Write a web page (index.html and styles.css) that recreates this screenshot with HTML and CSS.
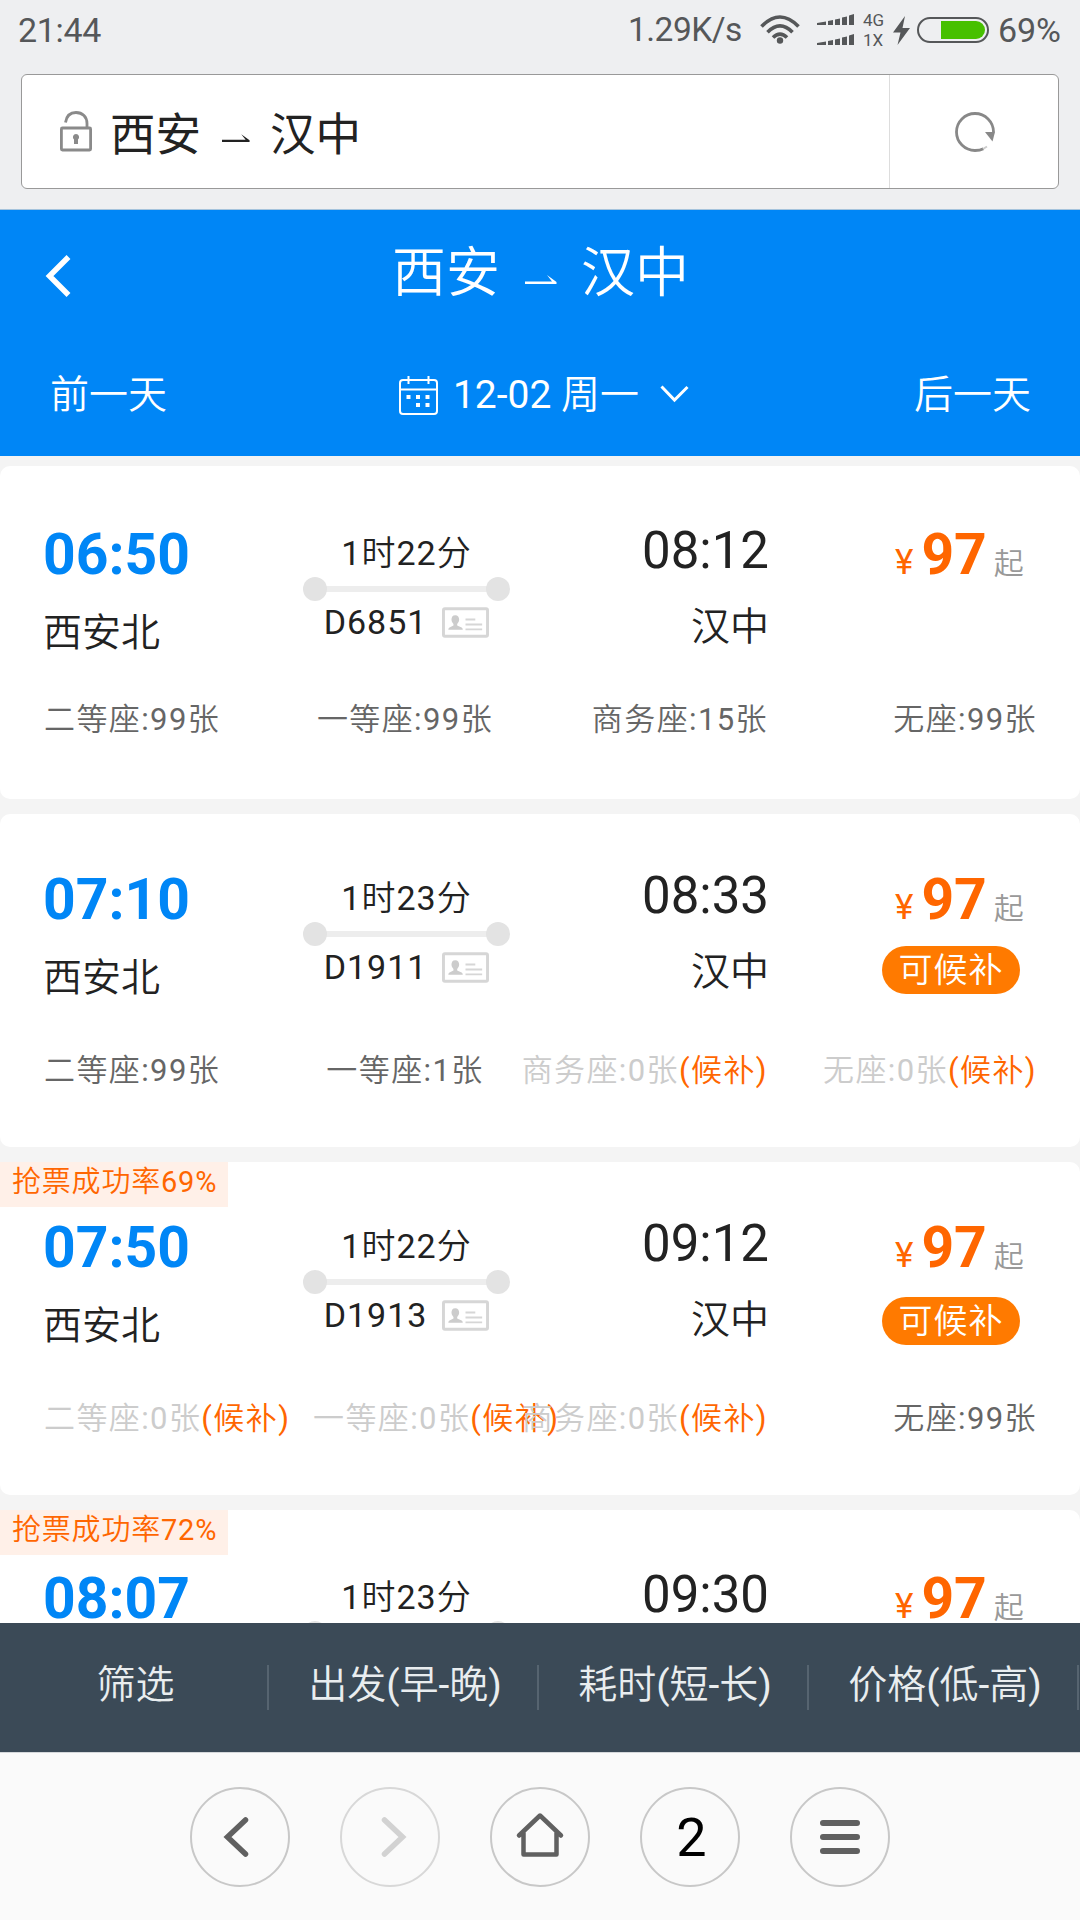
FILE: index.html
```html
<!DOCTYPE html>
<html lang="zh-CN">
<head>
<meta charset="UTF-8">
<meta name="viewport" content="width=device-width, initial-scale=1.0">
<title>西安 - 汉中</title>
<link rel="stylesheet" href="styles.css">
</head>
<body>

<!-- shared icons -->
<svg class="defs" width="0" height="0">
    <symbol id="half-arrow" viewBox="0 0 32 10">
        <path d="M0 6.4H27L22 0L31.5 7V9H0Z" fill="currentColor"/>
    </symbol>
    <symbol id="id-card" viewBox="0 0 48 31">
        <rect x="1.5" y="1.5" width="45" height="28" rx="1.5" fill="none" stroke="#d6d6d6" stroke-width="3"/>
        <path d="M13.5 8c2.8 0 4 2 4 4.500c0 2-1 3.500-2 4.500v1.500l4.500 2c1 .5 1.200 1.500 1.200 2.500H6.500c0-1 .2-2 1.200-2.500l4-2V17c-1-1-2-2.500-2-4.500C9.700 10 10.700 8 13.500 8Z" fill="#ccc"/>
        <path d="M24 12.500h10M24 17.500h17M24 22.500h17" stroke="#d6d6d6" stroke-width="2"/>
    </symbol>
</svg>

<div class="status-bar">
    <span class="clock">21:44</span>
    <span class="speed">1.29K/s</span>
    <svg class="wifi" width="40" height="30" viewBox="0 0 40 30">
        <g fill="none" stroke="#555759" stroke-width="3.600">
            <path d="M1.500 11.500Q20 -7.500 38.500 11.500"/>
            <path d="M7.500 17.300Q20 4.500 32.500 17.300"/>
            <path d="M13 22.500Q20 15.500 27 22.500"/>
        </g>
        <circle cx="20" cy="25.500" r="3.200" fill="#555759"/>
    </svg>
    <svg class="signal" width="38" height="33" viewBox="0 0 38 33" fill="#555759">
        <path d="M0 9L9 7.500V11H0ZM11 7L16 6V11H11ZM18 5.500L23 4.500V11H18ZM25 3.500L30 2.500V11H25ZM32 1.500L37 0V11H32Z"/>
        <path d="M0 29L9 27.500V31H0ZM11 27L16 26V31H11ZM18 25.500L23 24.500V31H18ZM25 23.500L30 22.500V31H25ZM32 21.500L37 20V31H32Z"/>
    </svg>
    <div class="net"><span>4G</span><span>1X</span></div>
    <svg class="bolt" width="17" height="29" viewBox="0 0 17 29">
        <path d="M12 0L0 16.500H7.500L4.500 29L17 12H9.500Z" fill="#555759"/>
    </svg>
    <div class="battery"><i></i></div>
    <span class="percent">69%</span>
</div>

<div class="address-row">
    <div class="address">
        <div class="url">
            <svg class="lock" width="32" height="41" viewBox="0 0 32 41">
                <g fill="none" stroke="#8a8a8a" stroke-width="2.800">
                    <rect x="1.400" y="17" width="29.200" height="22" rx="1"/>
                    <path d="M5.500 11.500C6.500 5 10.500 1.500 16 1.500C22.500 1.500 27 6 27 12.500V17"/>
                </g>
                <path d="M16 23a3.200 3.200 0 0 1 2 5.600V33h-4v-4.400A3.200 3.200 0 0 1 16 23Z" fill="#8a8a8a"/>
            </svg>
            <span>西安</span>
            <svg class="arrow" width="28" height="9"><use href="#half-arrow"/></svg>
            <span>汉中</span>
        </div>
        <div class="refresh">
            <svg width="42" height="42" viewBox="0 0 42 42">
                <path d="M39.500 21A18.500 18.500 0 1 0 21 39.500Q26 39.500 29.500 37.800" fill="none" stroke="#888" stroke-width="2.800"/>
                <path d="M29 38L33 35.500" stroke="#ccc" stroke-width="2"/>
                <path d="M31 21H41L38.500 30.500Z" fill="#888"/>
            </svg>
        </div>
    </div>
</div>

<div class="header">
    <div class="title-row">
        <svg class="back" width="26" height="42" viewBox="0 0 26 42"><path d="M23.500 2L4.500 21L23.500 40" fill="none" stroke="#fff" stroke-width="5.500"/></svg>
        <div class="title">
            <span>西安</span>
            <svg class="arrow" width="32" height="10"><use href="#half-arrow"/></svg>
            <span>汉中</span>
        </div>
    </div>
    <div class="date-row">
        <span class="prev">前一天</span>
        <div class="date">
            <svg width="39" height="39" viewBox="0 0 39 39">
                <g fill="none" stroke="#fff" stroke-width="2">
                    <rect x="1" y="4" width="37" height="34" rx="3"/>
                    <path d="M1 13.500H38M9.500 0V8M29.500 0V8"/>
                </g>
                <path d="M7.500 19h4v4h-4zM17 19h4v4h-4zM26.500 19h4v4h-4zM17 27h4v4h-4zM26.500 27h4v4h-4z" fill="#fff"/>
            </svg>
            <span>12-02 周一</span>
            <svg class="down" width="29" height="18" viewBox="0 0 29 18"><path d="M1.500 1.500L14.500 15L27.500 2" fill="none" stroke="#fff" stroke-width="3"/></svg>
        </div>
        <span class="next">后一天</span>
    </div>
</div>

<div class="list">
    <div class="card card-first">
        <div class="main">
            <div class="from"><b>06:50</b><p>西安北</p></div>
            <div class="trip">
                <p>1时22分</p>
                <div class="line"></div>
                <p class="no">D6851<svg width="48" height="31"><use href="#id-card"/></svg></p>
            </div>
            <div class="to"><b>08:12</b><p>汉中</p></div>
            <div class="fare">
                <div class="price"><i>¥</i><b>97</b><span>起</span></div>
            </div>
        </div>
        <div class="seats">
            <span>二等座:99张</span>
            <span>一等座:99张</span>
            <span>商务座:15张</span>
            <span>无座:99张</span>
        </div>
    </div>

    <div class="card">
        <div class="main">
            <div class="from"><b>07:10</b><p>西安北</p></div>
            <div class="trip">
                <p>1时23分</p>
                <div class="line"></div>
                <p class="no">D1911<svg width="48" height="31"><use href="#id-card"/></svg></p>
            </div>
            <div class="to"><b>08:33</b><p>汉中</p></div>
            <div class="fare">
                <div class="price"><i>¥</i><b>97</b><span>起</span></div>
                <div class="wait">可候补</div>
            </div>
        </div>
        <div class="seats">
            <span>二等座:99张</span>
            <span>一等座:1张</span>
            <span class="none">商务座:0张<em>(候补)</em></span>
            <span class="none">无座:0张<em>(候补)</em></span>
        </div>
    </div>

    <div class="card card-rate">
        <div class="rate">抢票成功率69%</div>
        <div class="main">
            <div class="from"><b>07:50</b><p>西安北</p></div>
            <div class="trip">
                <p>1时22分</p>
                <div class="line"></div>
                <p class="no">D1913<svg width="48" height="31"><use href="#id-card"/></svg></p>
            </div>
            <div class="to"><b>09:12</b><p>汉中</p></div>
            <div class="fare">
                <div class="price"><i>¥</i><b>97</b><span>起</span></div>
                <div class="wait">可候补</div>
            </div>
        </div>
        <div class="seats">
            <span class="none">二等座:0张<em>(候补)</em></span>
            <span class="none">一等座:0张<em>(候补)</em></span>
            <span class="none">商务座:0张<em>(候补)</em></span>
            <span>无座:99张</span>
        </div>
    </div>

    <div class="card card-last">
        <div class="rate">抢票成功率72%</div>
        <div class="main">
            <div class="from"><b>08:07</b></div>
            <div class="trip">
                <p>1时23分</p>
                <div class="line"></div>
            </div>
            <div class="to"><b>09:30</b></div>
            <div class="fare">
                <div class="price"><i>¥</i><b>97</b><span>起</span></div>
            </div>
        </div>
    </div>
</div>

<div class="filters">
    <div>筛选</div>
    <div>出发(早-晚)</div>
    <div>耗时(短-长)</div>
    <div>价格(低-高)</div>
</div>

<div class="toolbar">
    <div class="btn">
        <svg width="100" height="100" viewBox="0 0 100 100"><path d="M55.500 33L37.500 50L55.500 67" fill="none" stroke="#606060" stroke-width="5.500" stroke-linecap="round"/></svg>
    </div>
    <div class="btn off">
        <svg width="100" height="100" viewBox="0 0 100 100"><path d="M44.500 33L62.500 50L44.500 67" fill="none" stroke="#d2d2d2" stroke-width="5.500" stroke-linecap="round"/></svg>
    </div>
    <div class="btn">
        <svg width="100" height="100" viewBox="0 0 100 100"><path d="M29 48.500L50 28.500L71 48.500M33.500 46V67.500H66.500V46" fill="none" stroke="#606060" stroke-width="4.500" stroke-linecap="round" stroke-linejoin="round"/></svg>
    </div>
    <div class="btn count">2</div>
    <div class="btn">
        <svg width="100" height="100" viewBox="0 0 100 100"><path d="M33 36H67M33 50H67M33 64H67" stroke="#606060" stroke-width="6" stroke-linecap="round"/></svg>
    </div>
</div>

</body>
</html>
```

FILE: styles.css
```css
* {
    box-sizing: border-box;
}

body {
    display: flex;
    flex-direction: column;
    width: 1080px;
    height: 1920px;
    margin: 0;
    overflow: hidden;
    background-color: #f4f4f4;
    color: #222;
    font-family: Roboto, "Noto Sans CJK SC DemiLight", "Noto Sans CJK SC", sans-serif;
}

p {
    margin: 0;
}

i, em {
    font-style: normal;
}

svg {
    display: block;
    flex: none;
}

.defs {
    position: absolute;
}

/* status bar */
.status-bar {
    display: flex;
    align-items: center;
    height: 60px;
    padding: 0 19px 0 18px;
    background-color: #eeeff1;
    color: #555759;
    font-size: 34px;
    line-height: 60px;
}

.clock {
    letter-spacing: -0.3px;
}

.speed {
    margin-left: auto;
    font-size: 33.5px;
    letter-spacing: -0.5px;
}

.wifi {
    margin-left: 18px;
}

.signal {
    margin-left: 17px;
}

.net {
    display: flex;
    flex-direction: column;
    width: 23px;
    margin-left: 8px;
    font-size: 17px;
    line-height: 20px;
}

.bolt {
    margin-left: 7px;
}

.battery {
    display: flex;
    justify-content: flex-end;
    width: 72px;
    height: 26px;
    margin: 0 9px 0 7px;
    padding: 2px;
    border: 2px solid #555759;
    border-radius: 13px;
}

.battery i {
    width: 44px;
    background-color: #47c000;
    border-radius: 0 9px 9px 0;
}

/* address bar */
.address-row {
    height: 150px;
    padding: 14px 21px 0;
    background-color: #eeeff1;
    border-bottom: 1px solid #a5c3dc;
}

.address {
    display: flex;
    height: 115px;
    background-color: #fff;
    border: 1px solid #999;
    border-radius: 6px;
}

.url {
    display: flex;
    align-items: center;
    flex: 1;
    padding-left: 38px;
    font-family: "Noto Sans CJK SC", sans-serif;
    font-size: 45.5px;
    line-height: 58px;
}

.url span {
    margin-top: -2px;
}

.lock {
    margin-right: 18px;
}

.url .arrow {
    margin: 14px 20px 0 21px;
}

.refresh {
    display: flex;
    align-items: center;
    justify-content: center;
    width: 169px;
    padding-left: 2px;
    border-left: 1px solid #ddd;
}

/* page header */
.header {
    height: 246px;
    background-color: #0086f6;
    color: #fff;
}

.title-row {
    display: flex;
    align-items: center;
    height: 126px;
    padding: 6px 44px 0 45px;
}

.title {
    display: flex;
    align-items: center;
    justify-content: center;
    flex: 1;
    margin-right: 26px;
    font-size: 54px;
    line-height: 60px;
}

.title span {
    margin-top: -4px;
}

.title .arrow {
    margin: 7px 24px 0 25px;
}

.date-row {
    display: flex;
    align-items: center;
    justify-content: space-between;
    height: 118px;
    padding: 0 49px 0 50px;
    font-size: 39px;
    line-height: 48px;
}

.date {
    display: flex;
    align-items: center;
    margin-left: 7px;
}

.date span {
    margin: -1px 21px 0 15px;
}

.date .down {
    margin-top: -3px;
}

/* train list */
.list {
    display: flex;
    flex-direction: column;
    gap: 15px;
    height: 1167px;
    padding-top: 10px;
    overflow: hidden;
}

.card {
    position: relative;
    flex: none;
    height: 333px;
    padding: 55px 43px 0 44px;
    background-color: #fff;
    border-radius: 10px;
}

.card-first,
.card-last {
    padding-top: 58px;
}

.main {
    display: grid;
    grid-template-columns: 269px 184px 271px 269px;
    height: 184px;
}

.card-first .main {
    height: 178px;
}

.from b {
    display: block;
    margin: 1px 0 0 -1px;
    color: #0086f6;
    font-size: 57px;
    line-height: 60px;
}

.from p,
.to p {
    font-size: 39px;
    line-height: 48px;
}

.from p {
    margin: 24px 0 0 -1px;
}

.trip {
    width: 207px;
    margin-left: -10px;
    padding-top: 11px;
    font-size: 34px;
    line-height: 36px;
    letter-spacing: 1px;
    text-align: center;
}

.line {
    display: flex;
    align-items: center;
    justify-content: space-between;
    height: 24px;
    margin: 6px 0 3px;
    background: linear-gradient(#ededed, #ededed) center / 180px 6px no-repeat;
}

.line::before,
.line::after {
    content: "";
    width: 24px;
    height: 24px;
    background-color: #e3e3e3;
    border-radius: 50%;
}

.no {
    display: flex;
    align-items: center;
    justify-content: center;
}

.no svg {
    width: 47px;
    margin-left: 15px;
}

.to {
    margin-right: -1px;
    text-align: right;
}

.to b {
    display: block;
    font-size: 51px;
    font-weight: normal;
    line-height: 54px;
}

.to p {
    margin-top: 25px;
}

.price {
    display: flex;
    align-items: baseline;
    height: 60px;
    padding: 1px 0 0 127px;
    color: #ff6600;
    line-height: 60px;
}

.price i {
    font-size: 35px;
}

.price b {
    margin: 0 7px 0 8px;
    font-size: 57px;
}

.price span {
    color: #999;
    font-size: 30px;
}

.wait {
    width: 138px;
    height: 48px;
    margin: 17px 0 0 114px;
    background-color: #ff7a00;
    border-radius: 24px;
    color: #fff;
    font-size: 34px;
    line-height: 48px;
    letter-spacing: 1px;
    text-align: center;
}

.card-rate .wait {
    margin-top: 20px;
}

.seats {
    display: grid;
    grid-template-columns: 269px 184px 271px 269px;
    color: #666;
    font-size: 31px;
    line-height: 35px;
    letter-spacing: 1.4px;
    white-space: nowrap;
}

.seats span:nth-child(2) {
    text-align: center;
}

.seats span:nth-child(n+3) {
    text-align: right;
}

.seats .none {
    color: #ccc;
}

.seats em {
    color: #ff6600;
}

/* success rate label in the card corner */
.rate {
    position: absolute;
    top: 0;
    left: 0;
    width: 228px;
    height: 45px;
    padding-left: 12px;
    background-color: #fff0e8;
    color: #ff6600;
    font-size: 29px;
    line-height: 41px;
    letter-spacing: 0.8px;
    white-space: nowrap;
}

/* sort tabs */
.filters {
    display: flex;
    align-items: center;
    height: 129px;
    background-color: #3b4a57;
    color: #e9edef;
    font-size: 39px;
}

.filters div {
    width: 270px;
    height: 45px;
    padding-left: 4px;
    border-right: 2px solid #566470;
    line-height: 41px;
    text-align: center;
}

.filters div:first-child {
    width: 269px;
}

/* browser toolbar */
.toolbar {
    display: flex;
    justify-content: center;
    gap: 50px;
    flex: 1;
    padding-top: 34px;
    background-color: #fafafa;
    border-top: 1px solid #d5d8db;
}

.btn {
    display: flex;
    align-items: center;
    justify-content: center;
    width: 100px;
    height: 100px;
    border: 2px solid #c8c8c8;
    border-radius: 50%;
}

.btn.off {
    border-color: #d8d8d8;
}

.count {
    padding-left: 3px;
    color: #000;
    font-size: 54px;
    line-height: 95px;
}
```
